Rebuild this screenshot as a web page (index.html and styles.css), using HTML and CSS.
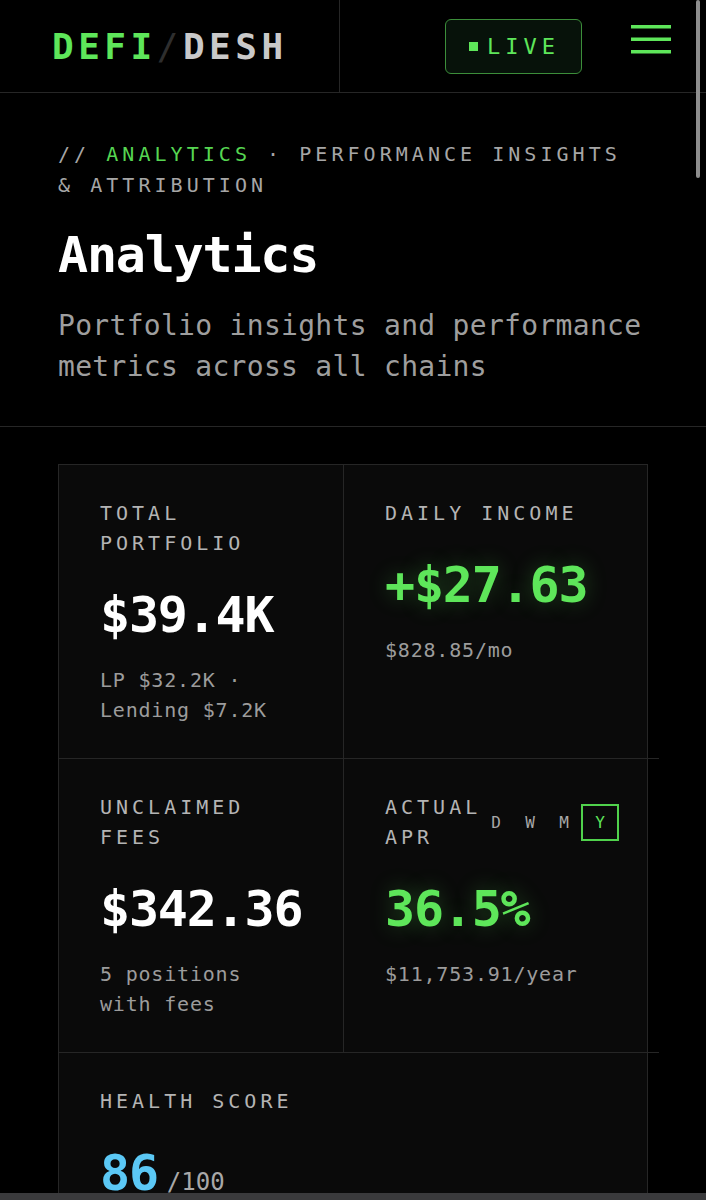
FILE: index.html
```html
<!DOCTYPE html>
<html lang="en">
<head>
  <meta charset="UTF-8" />
  <meta name="viewport" content="width=device-width, initial-scale=1.0"/>
  <title>DEFI/DESH · Analytics</title>
  <link rel="stylesheet" href="styles.css">
</head>
<body>
  <header class="topbar">
    <div class="brand">
      <span class="brand-defi">DEFI</span><span class="brand-slash">/</span><span class="brand-desh">DESH</span>
    </div>
    <div class="topbar-actions">
      <button class="live-badge"><span class="live-dot"></span><span class="live-text">LIVE</span></button>
      <button class="menu-btn" aria-label="Menu">
        <svg width="40" height="30" viewBox="0 0 40 30">
          <rect x="0" y="1" width="40" height="3.5" fill="currentColor"/>
          <rect x="0" y="13.5" width="40" height="3.5" fill="currentColor"/>
          <rect x="0" y="26" width="40" height="3.5" fill="currentColor"/>
        </svg>
      </button>
    </div>
  </header>

  <section class="page-head">
    <div class="crumbs">// <span class="crumb-active">ANALYTICS</span> · PERFORMANCE INSIGHTS &amp; ATTRIBUTION</div>
    <h1 class="page-title">Analytics</h1>
    <p class="page-desc">Portfolio insights and performance metrics across all chains</p>
  </section>

  <main class="metrics">
    <div class="metric">
      <div class="metric-label">Total Portfolio</div>
      <div class="metric-value">$39.4K</div>
      <div class="metric-sub">LP $32.2K · Lending $7.2K</div>
    </div>
    <div class="metric metric-right">
      <div class="metric-label">Daily Income</div>
      <div class="metric-value is-up">+$27.63</div>
      <div class="metric-sub">$828.85/mo</div>
    </div>
    <div class="metric">
      <div class="metric-label">Unclaimed Fees</div>
      <div class="metric-value">$342.36</div>
      <div class="metric-sub">5 positions with fees</div>
    </div>
    <div class="metric metric-right">
      <div class="metric-head">
        <div class="metric-label">Actual APR</div>
        <div class="range-toggle">
          <button class="range-btn">D</button>
          <button class="range-btn">W</button>
          <button class="range-btn">M</button>
          <button class="range-btn active">Y</button>
        </div>
      </div>
      <div class="metric-value is-up">36.5%</div>
      <div class="metric-sub">$11,753.91/year</div>
    </div>
    <div class="metric metric-wide">
      <div class="metric-label">Health Score</div>
      <div class="metric-value"><span class="score-num">86</span><span class="score-max">/100</span></div>
    </div>
  </main>

  <div class="scroll-thumb"></div>
  <div class="home-strip"></div>
</body>
</html>
```

FILE: styles.css
```css
* { margin: 0; padding: 0; box-sizing: border-box; }
html { scrollbar-width: none; }
html::-webkit-scrollbar { display: none; }
html, body {
  background-color: #000;
  font-family: "DejaVu Sans Mono", "Liberation Mono", monospace;
  color: #fff;
}
button { font-family: inherit; background: none; border: none; cursor: pointer; }

/* top bar */
.topbar {
  display: flex;
  height: 93px;
  border-bottom: 1px solid #262626;
}
.brand {
  width: 340px;
  display: flex;
  align-items: center;
  padding-left: 52px;
  border-right: 1px solid #262626;
  font-size: 36px;
  font-weight: bold;
  letter-spacing: 4.5px;
}
.brand-defi { color: #5ee65a; }
.brand-slash { color: #2e2e2e; font-weight: normal; }
.brand-desh { color: #c9c9c9; }

.topbar-actions {
  flex: 1;
  display: flex;
  align-items: center;
  justify-content: flex-end;
  gap: 49px;
  padding-right: 35px;
}
.live-badge {
  width: 137px;
  height: 55px;
  display: flex;
  align-items: center;
  gap: 9px;
  padding-left: 23px;
  border: 1px solid #3c8e3a;
  border-radius: 6px;
  background-color: #07120a;
  color: #5ee65a;
  font-size: 22px;
  letter-spacing: 5px;
}
.live-dot {
  width: 9px;
  height: 9px;
  background-color: #5ee65a;
}
.menu-btn {
  color: #5ee65a;
  display: flex;
  margin-bottom: 14px;
}

/* page heading */
.page-head {
  padding: 46px 58px 39px;
  border-bottom: 1px solid #262626;
}
.crumbs {
  font-size: 20px;
  line-height: 31px;
  letter-spacing: 4.04px;
  color: #a6a6a6;
}
.crumb-active { color: #56d652; }
.page-title {
  margin-top: 24px;
  font-size: 50px;
  line-height: 60px;
  letter-spacing: -1.2px;
  font-weight: bold;
}
.page-desc {
  margin-top: 20px;
  font-size: 28px;
  line-height: 41px;
  letter-spacing: 0.3px;
  color: #9e9e9e;
}

/* metric cards */
.metrics {
  display: grid;
  grid-template-columns: 285px 304px;
  margin: 37px 0 0 58px;
  width: 590px;
  border-top: 1px solid #262626;
  border-left: 1px solid #262626;
}
.metric {
  position: relative;
  padding: 33px 44px 33px 41px;
  background-color: #0a0a0a;
  border-right: 1px solid #262626;
  border-bottom: 1px solid #262626;
}
.metric-right { padding-right: 28px; }
.metric-right::after {
  content: "";
  position: absolute;
  right: -12px;
  bottom: -1px;
  width: 11px;
  height: 1px;
  background-color: #262626;
}
.metric-wide {
  grid-column: span 2;
  min-height: 320px;
}
.metric-label {
  font-size: 20px;
  line-height: 30px;
  letter-spacing: 4px;
  text-transform: uppercase;
  color: #b4b4b4;
}
.metric-head {
  display: flex;
  align-items: center;
}
.metric-head .metric-label { flex: 1; min-width: 0; }
.metric-value {
  margin-top: 27px;
  font-size: 50px;
  line-height: 60px;
  letter-spacing: -1.2px;
  font-weight: bold;
  white-space: nowrap;
}
.metric-value.is-up {
  color: #5ee65a;
  text-shadow: 0 0 22px rgba(94, 230, 90, 0.3);
}
.metric-sub {
  margin-top: 20px;
  font-size: 20px;
  line-height: 30px;
  letter-spacing: 0.8px;
  color: #9c9c9c;
}

.range-toggle {
  display: flex;
  flex-shrink: 0;
  align-items: center;
}
.range-btn {
  width: 34px;
  height: 36px;
  font-size: 16px;
  color: #a8a8a8;
}
.range-btn.active {
  width: 38px;
  height: 37px;
  border: 2px solid #50d24c;
  color: #5ee65a;
}

.score-num { color: #5bc8f5; }
.score-max {
  margin-left: 9px;
  font-size: 24px;
  font-weight: normal;
  letter-spacing: 0;
  color: #a8a8a8;
}

/* overlay scroll indicator and bottom strip */
.scroll-thumb {
  position: fixed;
  top: 0;
  right: 6px;
  width: 4px;
  height: 178px;
  border-radius: 2px;
  background-color: #8e8e8e;
}
.home-strip {
  position: fixed;
  left: 0;
  right: 0;
  bottom: 0;
  height: 7px;
  background-color: #3a3a3c;
}
```
